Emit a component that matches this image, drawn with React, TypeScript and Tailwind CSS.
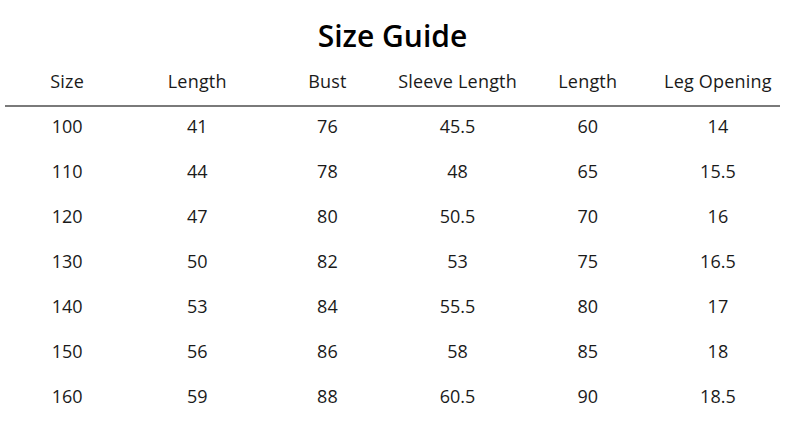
const headers = ["Size", "Length", "Bust", "Sleeve Length", "Length", "Leg Opening"];

const rows: string[][] = [
  ["100", "41", "76", "45.5", "60", "14"],
  ["110", "44", "78", "48", "65", "15.5"],
  ["120", "47", "80", "50.5", "70", "16"],
  ["130", "50", "82", "53", "75", "16.5"],
  ["140", "53", "84", "55.5", "80", "17"],
  ["150", "56", "86", "58", "85", "18"],
  ["160", "59", "88", "60.5", "90", "18.5"],
];

export default function App() {
  return (
    <div className="h-[445px] w-[785px] overflow-hidden bg-white font-['Open_Sans',sans-serif] text-[#1a1a1a]">
      <h1 className="flex h-[60px] items-center justify-center pt-[12px] text-[30px] font-semibold leading-none text-black">
        Size Guide
      </h1>

      <div className="grid h-[45px] grid-cols-6 items-center px-[2px] pb-[2px] text-[18px] tracking-[0.2px]">
        {headers.map((h, i) => (
          <div key={i} className="text-center">
            {h}
          </div>
        ))}
      </div>

      <div className="mx-[5px] h-[2px] bg-[#7a7a7a]" />

      {rows.map((row, r) => (
        <div key={r} className="grid h-[45px] grid-cols-6 items-center px-[2px] pb-[7px] text-[18px]">
          {row.map((cell, c) => (
            <div key={c} className="text-center">
              {cell}
            </div>
          ))}
        </div>
      ))}
    </div>
  );
}
